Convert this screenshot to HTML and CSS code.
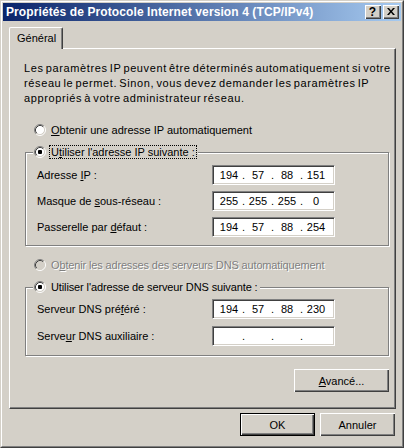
FILE: index.html
```html
<!DOCTYPE html>
<html lang="fr">
<head>
<meta charset="utf-8">
<title>Propriétés de Protocole Internet version 4 (TCP/IPv4)</title>
<link rel="stylesheet" href="styles.css">
</head>
<body>
<div class="window">
  <div class="frame">
    <div class="titlebar">
      <span class="title">Propriétés de Protocole Internet version 4 (TCP/IPv4)</span>
      <span class="tbtn help">?</span>
      <span class="tbtn close"><svg width="8" height="7" viewBox="0 0 8 7"><path d="M0 0h2l2 2.5L6 0h2L5 3.5 8 7H6L4 4.5 2 7H0l3-3.5z" fill="#000"/></svg></span>
    </div>
    <div class="client">
      <div class="tabs"><div class="tab">Général</div></div>
      <div class="panel">
        <p class="intro">Les paramètres IP peuvent être déterminés automatiquement si votre<br>réseau le permet. Sinon, vous devez demander les paramètres IP<br>appropriés à votre administrateur réseau.</p>

        <div class="radio r-first">
          <svg class="rb" width="12" height="12" viewBox="0 0 12 12"><circle cx="6" cy="6" r="4.5" fill="#fff"/><path d="M2.11 9.89A5.5 5.5 0 0 1 9.89 2.11" fill="none" stroke="#808080"/><path d="M9.89 2.11A5.5 5.5 0 0 1 2.11 9.89" fill="none" stroke="#fff"/><path d="M2.82 9.18A4.5 4.5 0 0 1 9.18 2.82" fill="none" stroke="#404040"/><path d="M9.18 2.82A4.5 4.5 0 0 1 2.82 9.18" fill="none" stroke="#d4d0c8"/></svg>
          <span class="rlabel"><u>O</u>btenir une adresse IP automatiquement</span>
        </div>

        <div class="group g-ip">
          <div class="legend">
            <svg class="rb" width="12" height="12" viewBox="0 0 12 12"><circle cx="6" cy="6" r="4.5" fill="#fff"/><path d="M2.11 9.89A5.5 5.5 0 0 1 9.89 2.11" fill="none" stroke="#808080"/><path d="M9.89 2.11A5.5 5.5 0 0 1 2.11 9.89" fill="none" stroke="#fff"/><path d="M2.82 9.18A4.5 4.5 0 0 1 9.18 2.82" fill="none" stroke="#404040"/><path d="M9.18 2.82A4.5 4.5 0 0 1 2.82 9.18" fill="none" stroke="#d4d0c8"/><rect x="4" y="4" width="4" height="4" rx="1" fill="#000"/></svg>
            <span class="rlabel focus">U<u>t</u>iliser l'adresse IP suivante :</span>
          </div>
          <div class="row"><span class="lbl">Adresse <u>I</u>P :</span><div class="ip"><span class="seg">194</span><span class="dot">.</span><span class="seg">57</span><span class="dot">.</span><span class="seg">88</span><span class="dot">.</span><span class="seg">151</span></div></div>
          <div class="row"><span class="lbl">Masque de <u>s</u>ous-réseau :</span><div class="ip"><span class="seg">255</span><span class="dot">.</span><span class="seg">255</span><span class="dot">.</span><span class="seg">255</span><span class="dot">.</span><span class="seg">0</span></div></div>
          <div class="row"><span class="lbl">Passerelle par <u>d</u>éfaut :</span><div class="ip"><span class="seg">194</span><span class="dot">.</span><span class="seg">57</span><span class="dot">.</span><span class="seg">88</span><span class="dot">.</span><span class="seg">254</span></div></div>
        </div>

        <div class="radio r-disabled disabled">
          <svg class="rb" width="12" height="12" viewBox="0 0 12 12"><circle cx="6" cy="6" r="4.5" fill="#d4d0c8"/><path d="M2.11 9.89A5.5 5.5 0 0 1 9.89 2.11" fill="none" stroke="#808080"/><path d="M9.89 2.11A5.5 5.5 0 0 1 2.11 9.89" fill="none" stroke="#fff"/><path d="M2.82 9.18A4.5 4.5 0 0 1 9.18 2.82" fill="none" stroke="#404040"/><path d="M9.18 2.82A4.5 4.5 0 0 1 2.82 9.18" fill="none" stroke="#d4d0c8"/></svg>
          <span class="rlabel">O<u>b</u>tenir les adresses des serveurs DNS automatiquement</span>
        </div>

        <div class="group g-dns">
          <div class="legend">
            <svg class="rb" width="12" height="12" viewBox="0 0 12 12"><circle cx="6" cy="6" r="4.5" fill="#fff"/><path d="M2.11 9.89A5.5 5.5 0 0 1 9.89 2.11" fill="none" stroke="#808080"/><path d="M9.89 2.11A5.5 5.5 0 0 1 2.11 9.89" fill="none" stroke="#fff"/><path d="M2.82 9.18A4.5 4.5 0 0 1 9.18 2.82" fill="none" stroke="#404040"/><path d="M9.18 2.82A4.5 4.5 0 0 1 2.82 9.18" fill="none" stroke="#d4d0c8"/><rect x="4" y="4" width="4" height="4" rx="1" fill="#000"/></svg>
            <span class="rlabel">Utiliser l'adresse de serveur DNS suivante :</span>
          </div>
          <div class="row"><span class="lbl">Serveur DNS pré<u>f</u>éré :</span><div class="ip"><span class="seg">194</span><span class="dot">.</span><span class="seg">57</span><span class="dot">.</span><span class="seg">88</span><span class="dot">.</span><span class="seg">230</span></div></div>
          <div class="row row-last"><span class="lbl">Serve<u>u</u>r DNS auxiliaire :</span><div class="ip"><span class="seg"></span><span class="dot">.</span><span class="seg"></span><span class="dot">.</span><span class="seg"></span><span class="dot">.</span><span class="seg"></span></div></div>
        </div>

        <div class="adv-row"><button class="btn adv"><u>A</u>vancé...</button></div>
      </div>
      <div class="footer">
        <button class="btn default">OK</button>
        <button class="btn">Annuler</button>
      </div>
    </div>
  </div>
</div>
</body>
</html>
```

FILE: styles.css
```css
html, body {
  margin: 0;
  padding: 0;
  background: #d4d0c8;
}
body {
  font-family: "Liberation Sans", Arial, sans-serif;
  font-size: 11px;
  color: #000;
}
.window {
  width: 404px;
  height: 448px;
  box-sizing: border-box;
  border: 1px solid;
  border-color: #d4d0c8 #404040 #404040 #d4d0c8;
}
.frame {
  height: 100%;
  box-sizing: border-box;
  border: 1px solid;
  border-color: #fff #808080 #808080 #fff;
  padding: 1px;
  display: flex;
  flex-direction: column;
}
.titlebar {
  height: 18px;
  flex: none;
  display: flex;
  align-items: center;
  padding: 0 2px 0 3px;
  background: linear-gradient(to right, #0a246a, #a6caf0);
}
.title {
  flex: 1;
  color: #fff;
  font-weight: bold;
  font-size: 12px;
  letter-spacing: 0.1px;
  white-space: nowrap;
}
.tbtn {
  width: 16px;
  height: 14px;
  box-sizing: border-box;
  background: #d4d0c8;
  box-shadow: inset 1px 1px #fff, inset -1px -1px #404040, inset -2px -2px #808080;
  display: flex;
  align-items: center;
  justify-content: center;
}
.help {
  font-weight: bold;
  font-size: 12px;
  line-height: 14px;
  margin-right: 2px;
  padding: 0 1px 0 0;
}
.close svg { display: block; margin: 0 1px 1px 0; }

.client {
  flex: 1;
  display: flex;
  flex-direction: column;
  padding: 6px 5px 0 6px;
}
.tabs {
  display: flex;
}
.tab {
  position: relative;
  z-index: 1;
  width: 54px;
  height: 22px;
  box-sizing: border-box;
  margin-bottom: -1px;
  padding: 3px 0 0 7px;
  line-height: 14px;
  background: #d4d0c8;
  border-top: 1px solid #fff;
  border-left: 1px solid #fff;
  border-right: 1px solid #404040;
  border-radius: 2px 2px 0 0;
  box-shadow: inset -1px 0 #808080;
}
.panel {
  height: 361px;
  flex: none;
  box-sizing: border-box;
  border: 1px solid;
  border-color: #fff #404040 #404040 #fff;
  box-shadow: inset -1px -1px #808080;
  padding: 0 6px 0 14px;
  display: flex;
  flex-direction: column;
}
.panel > * { flex: none; }
.intro {
  margin: 12px 0 0 0;
  line-height: 15px;
  letter-spacing: 0.62px;
  word-spacing: -1.5px;
  white-space: nowrap;
}
.radio, .legend {
  display: flex;
  align-items: center;
  height: 14px;
}
.radio {
  margin-left: 10px;
}
.r-first { margin-top: 17px; }
.r-disabled { margin-top: 12px; }
.rb { display: block; flex: none; }
.rlabel {
  margin-left: 5px;
  white-space: nowrap;
  line-height: 12px;
}
.focus {
  margin-left: 4px;
  padding: 0 1px;
  outline: 1px dotted #000;
  outline-offset: 0;
}
.disabled .rlabel {
  color: #808080;
  text-shadow: 1px 1px 0 #fff;
  letter-spacing: -0.15px;
}
.group {
  margin-left: 1px;
  border: 1px solid #808080;
  box-shadow: inset 1px 1px #fff, 1px 1px #fff;
  padding: 0 0 8px 11px;
  display: flex;
  flex-direction: column;
}
.g-ip { margin-top: 15px; }
.g-dns { margin-top: 15px; padding-bottom: 9px; }
.g-dns .legend .rlabel { letter-spacing: -0.12px; }
.legend {
  align-self: flex-start;
  margin: -8px 0 0 -4px;
  padding: 0 2px 0 1px;
  background: #d4d0c8;
}
.row {
  display: flex;
  align-items: center;
  height: 20px;
  margin-top: 6px;
}
.legend + .row { margin-top: 6px; }
.g-dns .legend + .row { margin-top: 5px; }
.row-last { margin-top: 7px; }
.lbl {
  width: 175px;
  white-space: nowrap;
}
.ip {
  width: 123px;
  height: 20px;
  box-sizing: border-box;
  background: #fff;
  border: 1px solid;
  border-color: #808080 #fff #fff #808080;
  box-shadow: inset 1px 1px #404040, inset -1px -1px #d4d0c8;
  display: flex;
  align-items: center;
  padding-left: 4px;
}
.seg {
  width: 24px;
  text-align: center;
}
.dot {
  width: 5px;
  text-align: center;
}
.adv-row {
  display: flex;
  justify-content: flex-end;
  margin-top: 13px;
}
.btn {
  font-family: inherit;
  font-size: 11px;
  color: #000;
  background: #d4d0c8;
  border: none;
  border-radius: 0;
  margin: 0;
  padding: 0;
  width: 75px;
  height: 23px;
  box-sizing: border-box;
  box-shadow: inset 1px 1px #fff, inset -1px -1px #404040, inset -2px -2px #808080;
}
.adv { width: 95px; }
.footer {
  display: flex;
  justify-content: flex-end;
  gap: 5px;
  margin-top: 4px;
  padding-right: 1px;
}
.default {
  border: 1px solid #000;
}
```
